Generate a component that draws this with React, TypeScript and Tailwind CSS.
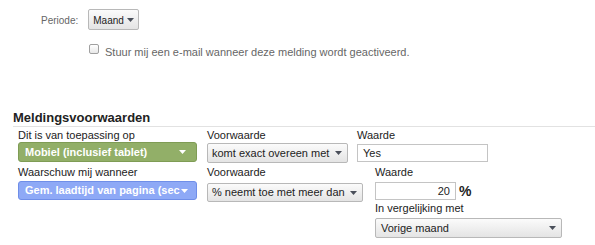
import React from 'react';

const Arrow = ({ color = '#4a4f5a' }: { color?: string }) => (
  <svg width="7" height="4" viewBox="0 0 7 4" className="shrink-0">
    <polygon points="0,0 7,0 3.5,4" fill={color} />
  </svg>
);

const GraySelect = ({ value, className }: { value: string; className: string }) => (
  <div
    className={`flex items-center justify-between rounded-[2px] border border-[#b8b8b8] bg-gradient-to-b from-[#fbfbfb] to-[#e4e4e4] pl-[4px] pr-[5px] text-[11px] text-[#222] ${className}`}
  >
    <span className="whitespace-nowrap">{value}</span>
    <Arrow />
  </div>
);

const Label = ({ children }: { children: React.ReactNode }) => (
  <div className="h-[13px] whitespace-nowrap text-[11px] leading-[13px] text-[#222]">{children}</div>
);

export default function App() {
  return (
    <div className="h-[245px] w-[595px] overflow-hidden bg-white font-['Liberation_Sans',Arial,sans-serif]">
      <div className="flex h-[21px] items-center gap-[10px] pl-[41px] mt-[9px]">
        <span className="pt-[1px] text-[10px] text-[#666]">Periode:</span>
        <div className="flex h-[21px] w-[51px] items-center justify-between rounded-[2px] border border-[#b8b8b8] bg-gradient-to-b from-[#fbfbfb] to-[#e4e4e4] pl-[4px] pr-[4px] pt-[1px] text-[10px] text-[#222]">
          <span>Maand</span>
          <Arrow />
        </div>
      </div>

      <div className="mt-[14px] flex items-start gap-[6px] pl-[89px]">
        <div className="h-[10px] w-[10px] rounded-[2px] border border-[#a0a0a0] bg-gradient-to-b from-[#ffffff] to-[#e8e8e8]" />
        <span className="mt-[2px] text-[11px] leading-[13px] text-[#666]">
          Stuur mij een e-mail wanneer deze melding wordt geactiveerd.
        </span>
      </div>

      <div className="ml-[13px] mt-[51px] border-b border-[#e2e2e2] pb-[1px] text-[13px] font-bold leading-[15px] text-[#222]">
        Meldingsvoorwaarden
      </div>

      <div className="mt-[2px] flex items-start pl-[18px]">
        <div className="w-[189px]">
          <Label>Dit is van toepassing op</Label>
          <div className="flex h-[20px] w-[179px] items-center justify-between rounded-[3px] border border-[#7f9c55] bg-[#92af68] pl-[6px] pr-[10px] text-[11px] font-bold text-white">
            <span className="whitespace-nowrap">Mobiel (inclusief tablet)</span>
            <Arrow color="#ffffff" />
          </div>
        </div>
        <div className="w-[150px]">
          <Label>Voorwaarde</Label>
          <GraySelect value="komt exact overeen met" className="mt-[1px] h-[20px] w-[141px]" />
        </div>
        <div>
          <Label>Waarde</Label>
          <div className="mt-[2px] flex h-[18px] w-[131px] items-center border border-[#c4c4c4] bg-white pl-[5px] text-[11px] text-[#222]">
            Yes
          </div>
        </div>
      </div>

      <div className="mt-[3px] flex items-start pl-[18px]">
        <div className="w-[189px]">
          <Label>Waarschuw mij wanneer</Label>
          <div className="relative mt-[2px] h-[19px] w-[179px] rounded-[3px] border border-[#6f8ee8] bg-[#8ea9f6] pl-[6px] text-[11px] font-bold leading-[17px] text-white">
            <span className="whitespace-nowrap">Gem. laadtijd van pagina (sec</span>
            <span className="absolute right-[8px] top-[7px]">
              <Arrow color="#ffffff" />
            </span>
          </div>
        </div>
        <div className="w-[168px]">
          <Label>Voorwaarde</Label>
          <GraySelect value="% neemt toe met meer dan" className="mt-[4px] h-[19px] w-[156px]" />
        </div>
        <div>
          <Label>Waarde</Label>
          <div className="mt-[3px] flex items-center gap-[3px]">
            <div className="flex h-[18px] w-[81px] items-center justify-end border border-[#c4c4c4] bg-white pr-[5px] text-[11px] text-[#222]">
              20
            </div>
            <span className="text-[14px] font-bold leading-[16px] text-[#222]">%</span>
          </div>
          <div className="mt-[2px]">
            <Label>In vergelijking met</Label>
          </div>
          <GraySelect value="Vorige maand" className="mt-[3px] h-[20px] w-[187px] pl-[5px]" />
        </div>
      </div>
    </div>
  );
}
